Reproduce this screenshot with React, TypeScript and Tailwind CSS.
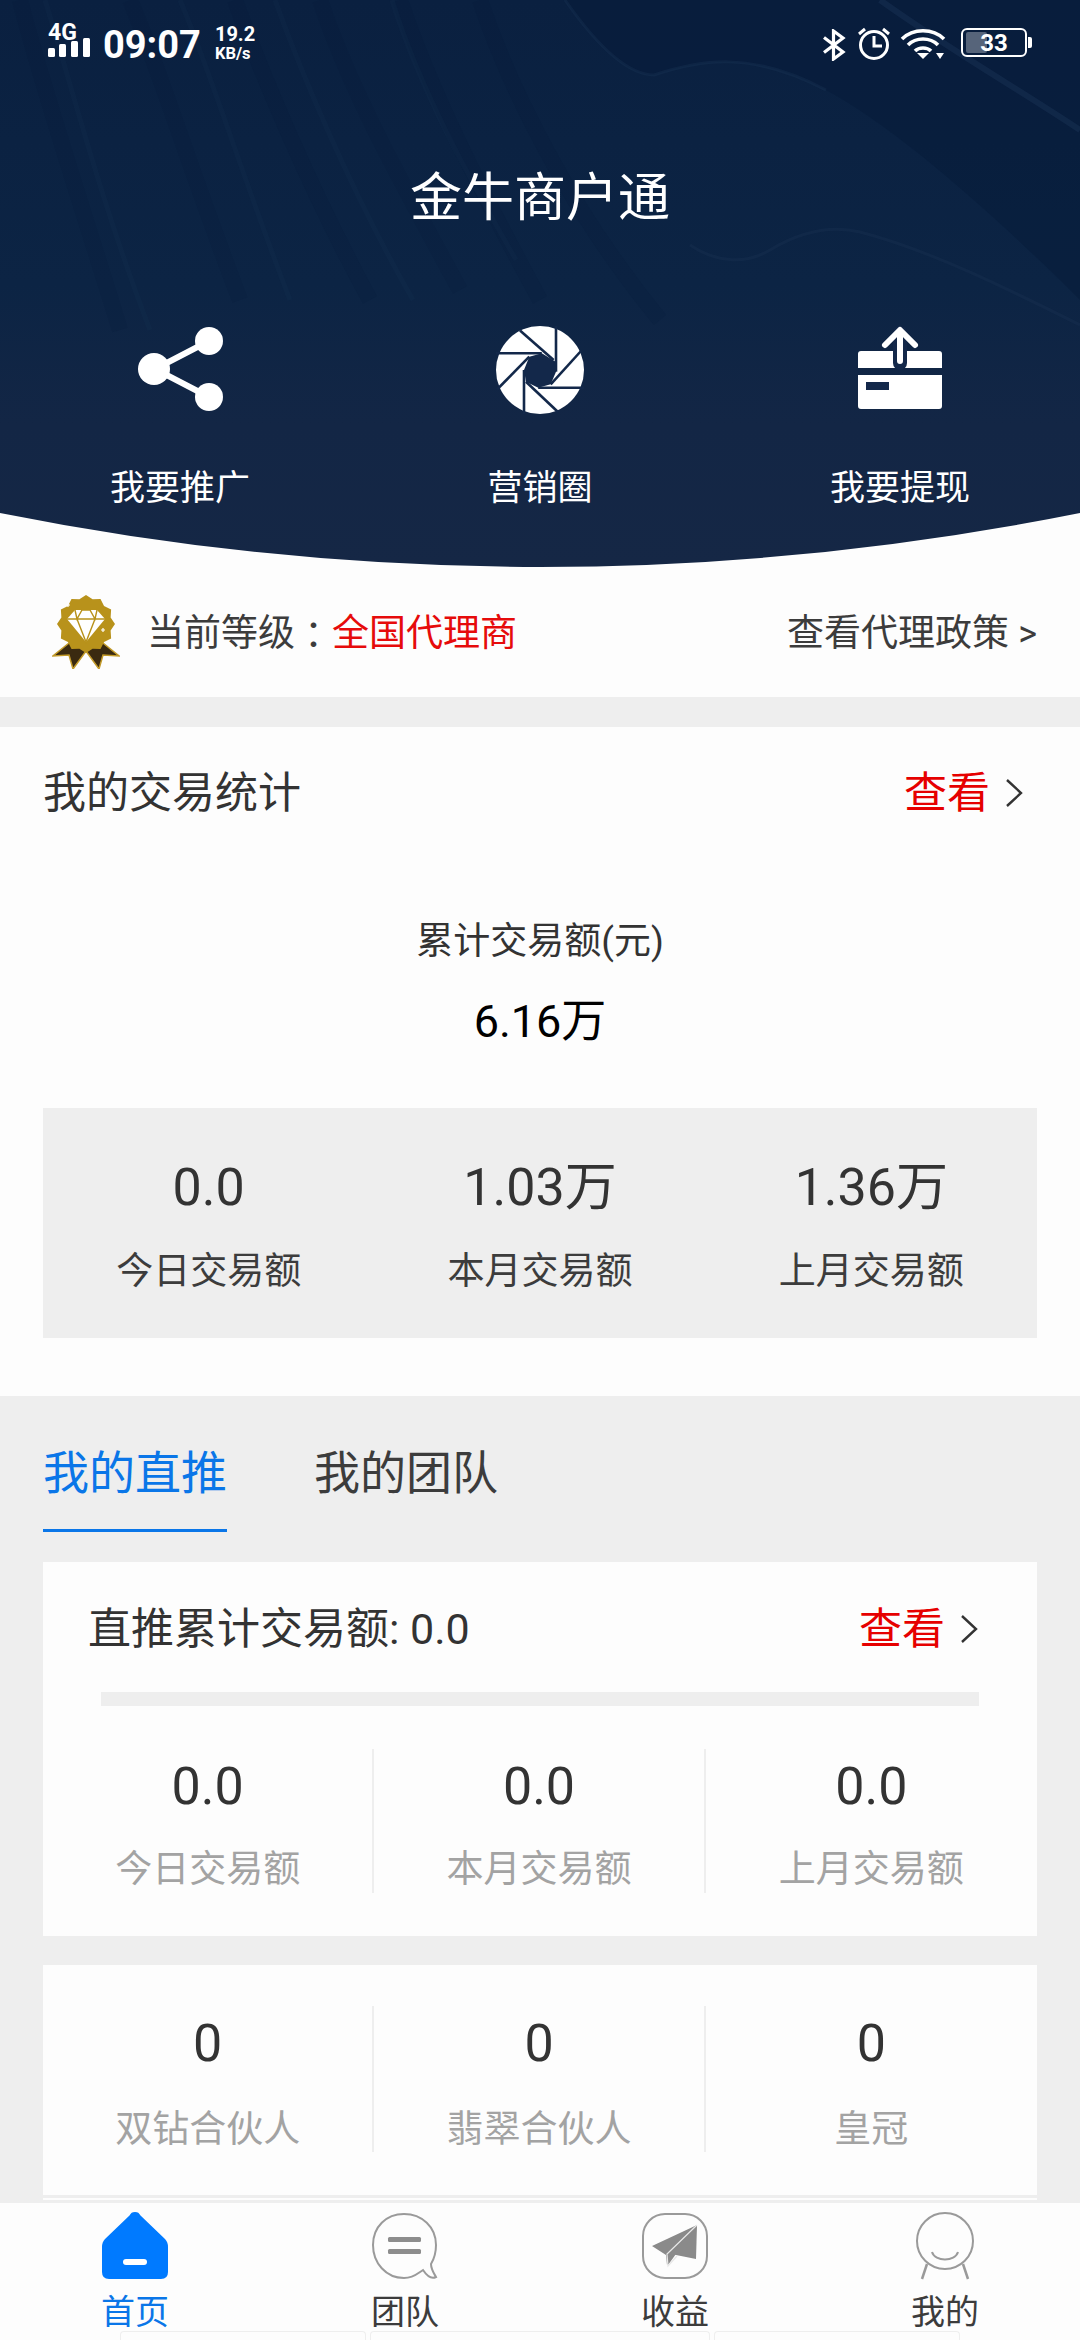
import React from "react";

const FONT = { fontFamily: '"Roboto","Noto Sans CJK SC",sans-serif' };

function HeaderBg() {
  return (
    <svg className="absolute inset-0" width="1080" height="567" viewBox="0 0 1080 567">
      <defs>
        <linearGradient id="hb" x1="0" y1="0" x2="0" y2="1">
          <stop offset="0" stopColor="#0a2040" />
          <stop offset="0.5" stopColor="#0c2444" />
          <stop offset="0.75" stopColor="#132645" />
          <stop offset="1" stopColor="#152745" />
        </linearGradient>
        <clipPath id="hc">
          <path d="M0 0H1080V513Q540 621 0 513Z" />
        </clipPath>
      </defs>
      <g clipPath="url(#hc)">
        <rect width="1080" height="567" fill="url(#hb)" />
        <g fill="none" stroke="#06193a" strokeOpacity="0.16" strokeWidth="16">
          <path d="M20 0C40 80 80 200 120 330" />
          <path d="M130 0C160 70 190 170 240 300" />
          <path d="M235 0C260 70 310 190 370 300" />
          <path d="M320 0C350 90 400 180 460 290" />
          <path d="M400 0C430 90 480 190 540 300" />
          <path d="M480 0C510 90 570 210 660 320" />
        </g>
        <g fill="none" stroke="#1b3558" strokeOpacity="0.16" strokeWidth="5">
          <path d="M45 0C70 80 100 200 150 330" />
          <path d="M180 0C210 70 240 170 290 300" />
          <path d="M275 0C300 70 350 190 413 300" />
          <path d="M392 0C420 90 470 180 516 260" />
        </g>
        <path d="M565 0C600 50 630 75 654 75C700 60 750 50 826 90C900 130 1000 220 1080 300V0Z" fill="#061a38" fillOpacity="0.4" />
        <path d="M565 0C600 50 630 75 654 75C700 60 750 50 826 90" fill="none" stroke="#1d3759" strokeOpacity="0.3" strokeWidth="3" />
        <path d="M690 245C715 262 745 265 770 250C800 232 830 225 860 232C930 250 1010 290 1080 325" fill="none" stroke="#1f3657" strokeOpacity="0.3" strokeWidth="3" />
        <path d="M880 0C950 50 1020 90 1080 130" fill="none" stroke="#1d3759" strokeOpacity="0.4" strokeWidth="6" />
      </g>
    </svg>
  );
}

function StatusBar() {
  return (
    <div className="relative flex h-[84px] justify-between pl-[48px] pr-[53px] pt-[24px] text-white">
      <div className="flex">
        <div className="flex w-[42px] flex-col">
          <div className="h-[13px] text-[23px] font-bold leading-[17px]">4G</div>
          <svg width="42" height="20" viewBox="0 0 42 20" fill="#fff">
            <rect x="0" y="11" width="7" height="9" rx="1.5" />
            <rect x="11" y="7" width="7" height="13" rx="1.5" />
            <rect x="23" y="4" width="7" height="16" rx="1.5" />
            <rect x="35" y="1" width="7" height="19" rx="1.5" />
          </svg>
        </div>
        <div className="ml-[13px] mt-[2px] text-[38px] font-bold leading-[38px]">09:07</div>
        <div className="ml-[14px] flex flex-col font-bold">
          <div className="text-[20px] leading-[21px]">19.2</div>
          <div className="text-[16.500px] leading-[17px]">KB/s</div>
        </div>
      </div>
      <div className="flex items-start">
        <svg width="24" height="32" viewBox="0 0 24 32" fill="none" stroke="#fff" strokeWidth="3.2" className="mt-[5px]">
          <path d="M2 8.5L21 23L11.5 30V2L21 9L2 23.5" />
        </svg>
        <svg width="34" height="34" viewBox="0 0 34 34" fill="none" stroke="#fff" strokeWidth="3" className="ml-[11px] mt-[2px]">
          <circle cx="17" cy="19" r="13.5" />
          <path d="M17 10V20H25" />
          <path d="M2 8L8 3M32 8L26 3" />
        </svg>
        <svg width="48" height="32" viewBox="0 0 48 32" fill="none" stroke="#fff" strokeWidth="3.6" className="ml-[9px] mt-[3px]">
          <path d="M2 12C13 1 33 1 44 12" />
          <path d="M8 18C16 10 30 10 38 18" />
          <path d="M15 24C19 20 27 20 31 24" />
          <path d="M17 26H29L23 32Z" fill="#fff" stroke="none" />
          <path d="M36 26H44L40 32Z" fill="#fff" stroke="none" />
        </svg>
        <div className="relative ml-[13px] mt-[4px] flex h-[29px] w-[66px] items-center justify-center rounded-[6px] border-2 border-white">
          <div className="absolute bottom-[2px] left-[3px] top-[2px] w-[21px] rounded-[2px] bg-[#56647a]" />
          <span className="relative text-[24px] font-bold leading-none">33</span>
          <div className="absolute left-[65px] top-[7px] h-[11px] w-[4px] rounded-r-[2px] bg-white" />
        </div>
      </div>
    </div>
  );
}

function ShareIcon() {
  return (
    <svg width="90" height="90" viewBox="0 0 90 90" fill="#fff">
      <path d="M74 16L20 44L74 72" fill="none" stroke="#fff" strokeWidth="6" />
      <circle cx="74" cy="16" r="14" />
      <circle cx="19" cy="44" r="16" />
      <circle cx="74" cy="72" r="14" />
    </svg>
  );
}

function ApertureIcon() {
  return (
    <svg width="90" height="90" viewBox="-45 -45 90 90">
      <circle r="44" fill="#fff" />
      <polygon points="1.8,-16.7 16,-8 16,1.7 10.7,14.3 -1.8,17.7 -14,11.7 -16,0 -10.7,-13.3" fill="#13284a" />
      <g stroke="#13284a" strokeWidth="2.6" fill="none">
        <path d="M-20 -39.5L13.6 -10" />
        <path d="M-44 -16.7H1.8" />
        <path d="M-43 19.5L-10.7 -13.3" />
        <path d="M-16 44V0" />
        <path d="M18 42L-14 11.7" />
        <path d="M-1.8 17.7H44" />
        <path d="M10.7 14.3L41 -19" />
        <path d="M16 -44V1.7" />
      </g>
    </svg>
  );
}

function CardIcon() {
  return (
    <svg width="90" height="90" viewBox="0 0 90 90">
      <path d="M3 29Q3 26 6 26H84Q87 26 87 29V43H3ZM3 50H87V81Q87 84 84 84H6Q3 84 3 81Z" fill="#fff" />
      <rect x="11" y="57" width="23" height="8" fill="#13284a" />
      <path d="M45 38V8" stroke="#13284a" strokeWidth="14" strokeLinecap="round" fill="none" />
      <path d="M45 36V6M30 20L45 5L60 20" stroke="#fff" strokeWidth="6" strokeLinecap="round" strokeLinejoin="round" fill="none" />
    </svg>
  );
}

function Medal() {
  const points: string[] = [];
  for (let i = 0; i < 24; i++) {
    const r = i % 2 === 0 ? 29 : 25.5;
    const a = (i / 24) * Math.PI * 2;
    points.push(`${34 + r * Math.sin(a)},${29 - r * Math.cos(a)}`);
  }
  return (
    <svg width="68" height="74" viewBox="0 0 68 74">
      <path d="M22 44L1 61L17 60L21 74L37 52Z" fill="#3a2a10" stroke="#c29a2a" strokeWidth="1.5" />
      <path d="M46 44L67 61L51 60L47 74L31 52Z" fill="#3a2a10" stroke="#c29a2a" strokeWidth="1.5" />
      <polygon points={points.join(" ")} fill="#b8921b" />
      <path d="M23 15H45L53 24L34 47L15 24Z" fill="#fff" />
      <path d="M15 24H53M25 24L34 47L43 24M23 15L25 24L30 15H38L43 24L45 15" fill="none" stroke="#b8921b" strokeWidth="1.4" />
      <path d="M16 8V12M14 10H18M51 33V37M49 35H53" stroke="#fff" strokeWidth="1.2" />
    </svg>
  );
}

function Chevron() {
  return (
    <svg width="20" height="32" viewBox="0 0 20 32" fill="none" stroke="#333" strokeWidth="2.4" className="ml-[14px]">
      <path d="M3 3L17 16L3 29" />
    </svg>
  );
}

function Header() {
  const items = [
    { icon: <ShareIcon />, label: "我要推广" },
    { icon: <ApertureIcon />, label: "营销圈" },
    { icon: <CardIcon />, label: "我要提现" },
  ];
  return (
    <div className="relative h-[567px] shrink-0 overflow-hidden">
      <HeaderBg />
      <StatusBar />
      <div className="relative mt-[81px] flex h-[64px] items-center justify-center pt-[4px] text-[52px] leading-none text-white">
        金牛商户通
      </div>
      <div className="relative mt-[96px] grid grid-cols-3">
        {items.map((it) => (
          <div key={it.label} className="flex flex-col items-center">
            <div className="h-[90px]">{it.icon}</div>
            <div className="mt-[51px] text-[35px] leading-[46px] text-white">{it.label}</div>
          </div>
        ))}
      </div>
    </div>
  );
}

function LevelRow() {
  return (
    <div className="flex h-[130px] shrink-0 items-center justify-between bg-[#fdfdfd] pl-[52px] pr-[43px]">
      <div className="flex items-center">
        <Medal />
        <div className="ml-[27px] flex items-center pt-[4px]">
          <span className="text-[37px] text-[#3c3c3c]">当前等级</span>
          <span className="font-['Noto_Sans_CJK_TC'] text-[37px] text-[#3c3c3c]">：</span>
          <span className="text-[37px] text-[#e60b0b]">全国代理商</span>
        </div>
      </div>
      <div className="pt-[4px] text-[37px] text-[#3c3c3c]">
        查看代理政策 <span className="text-[36px]">&gt;</span>
      </div>
    </div>
  );
}

function Stat({ v, l }: { v: string; l: string }) {
  return (
    <div className="flex flex-col items-center">
      <div className="h-[60px] text-[52px] leading-[60px] text-[#333]">{v}</div>
      <div className="mt-[30px] h-[48px] text-[37px] leading-[48px] text-[#3c3c3c]">{l}</div>
    </div>
  );
}

function SummaryCard() {
  return (
    <div className="h-[669px] shrink-0 bg-[#fdfdfd] px-[43px]">
      <div className="flex h-[130px] items-center justify-between pt-[2px]">
        <span className="text-[43px] text-[#333]">我的交易统计</span>
        <span className="flex items-center pr-[13px]">
          <span className="text-[43px] text-[#e60000]">查看</span>
          <Chevron />
        </span>
      </div>
      <div className="mt-[60px] text-center text-[37px] leading-[50px] text-[#333]">累计交易额(元)</div>
      <div className="mt-[30px] text-center text-[45px] font-normal leading-[50px] text-black">6.16万</div>
      <div className="mt-[61px] grid h-[230px] grid-cols-3 content-start bg-[#eeeeee] pt-[50px]">
        <Stat v="0.0" l="今日交易额" />
        <Stat v="1.03万" l="本月交易额" />
        <Stat v="1.36万" l="上月交易额" />
      </div>
    </div>
  );
}

function GreyStat({ v, l, last, h, gap }: { v: string; l: string; last?: boolean; h: string; gap: string }) {
  return (
    <div className={`flex flex-col items-center pt-[8px] ${h} ${last ? "" : "border-r-2 border-[#eeeeee]"}`}>
      <div className="h-[60px] text-[52px] leading-[60px] text-[#333]">{v}</div>
      <div className={`${gap} h-[48px] text-[37px] leading-[48px] text-[#a3a3a3]`}>{l}</div>
    </div>
  );
}

function Tabs() {
  return (
    <div className="flex h-[135px] items-start gap-[87px] px-[43px] pt-[43px]">
      <div className="flex h-[93px] w-[184px] flex-col border-b-[3px] border-[#0a76e8] pt-[4px] text-[46px] leading-[60px] text-[#0a76e8]">
        <span className="whitespace-nowrap">我的直推</span>
      </div>
      <div className="pt-[4px] text-[46px] leading-[60px] text-[#3c3c3c]">我的团队</div>
    </div>
  );
}

function DirectCard() {
  return (
    <div className="mx-[43px] h-[374px] bg-[#fdfdfd]">
      <div className="flex h-[130px] items-center justify-between pl-[45px] pr-[58px] pt-[4px]">
        <span className="text-[43px] text-[#333]">直推累计交易额: 0.0</span>
        <span className="flex items-center">
          <span className="text-[43px] text-[#e60000]">查看</span>
          <Chevron />
        </span>
      </div>
      <div className="mx-[58px] h-[14px] bg-[#eeeeee]" />
      <div className="mt-[43px] grid grid-cols-3">
        <GreyStat v="0.0" l="今日交易额" h="h-[144px]" gap="mt-[29px]" />
        <GreyStat v="0.0" l="本月交易额" h="h-[144px]" gap="mt-[29px]" />
        <GreyStat v="0.0" l="上月交易额" h="h-[144px]" gap="mt-[29px]" last />
      </div>
    </div>
  );
}

function PartnerCard() {
  return (
    <div className="mx-[43px] mt-[29px] h-[230px] bg-[#fdfdfd] pt-[41px]">
      <div className="grid grid-cols-3">
        <GreyStat v="0" l="双钻合伙人" h="h-[146px]" gap="mt-[32px]" />
        <GreyStat v="0" l="翡翠合伙人" h="h-[146px]" gap="mt-[32px]" />
        <GreyStat v="0" l="皇冠" h="h-[146px]" gap="mt-[32px]" last />
      </div>
    </div>
  );
}

function HomeIcon() {
  return (
    <svg width="68" height="68" viewBox="0 0 68 68">
      <path d="M34 0C37 0 38 1 39.500 3.500L64 27Q67 30 67 35V60Q67 67 60 67H8Q1 67 1 60V35Q1 30 4 27L28.500 3.500C30 1 31 0 34 0Z" fill="#007aff" />
      <rect x="22" y="47" width="24" height="6" rx="3" fill="#fff" />
    </svg>
  );
}

function ChatIcon() {
  return (
    <svg width="68" height="68" viewBox="0 0 68 68" fill="none">
      <path d="M33 2C15 2 2 15 2 33C2 51 15 66 33 66C43 66 47 61 52 58C56 64 61 67 65 65C62 60 60 57 60 52C63 47 65 40 65 33C65 15 51 2 33 2Z" stroke="#9a9a9a" strokeWidth="2" />
      <rect x="17" y="25" width="33" height="5" rx="1.500" fill="#8d8d8d" />
      <rect x="17" y="37" width="33" height="5" rx="1.500" fill="#8d8d8d" />
    </svg>
  );
}

function PlaneIcon() {
  return (
    <svg width="68" height="68" viewBox="0 0 68 68" fill="none">
      <rect x="2" y="2" width="64" height="64" rx="22" stroke="#9a9a9a" strokeWidth="2" />
      <path d="M56 13L11 34L25 43L26 53Z" fill="#8a8a8a" />
      <path d="M56 13L27 40L27 53Z" fill="#8a8a8a" />
      <path d="M56 13L30 42L55 47Z" fill="#8a8a8a" />
      <path d="M56 13L26 42L27 54L36 44" stroke="#e8e8e8" strokeWidth="1.200" />
    </svg>
  );
}

function MineIcon() {
  return (
    <svg width="68" height="68" viewBox="0 0 68 68" fill="none" stroke="#9a9a9a">
      <circle cx="34" cy="29" r="28" strokeWidth="2" />
      <path d="M21 40C24 50 44 50 47 40" strokeWidth="2" />
      <path d="M16 52L11 67M52 52L57 67" strokeWidth="2.500" />
    </svg>
  );
}

function BottomNav() {
  const items = [
    { icon: <HomeIcon />, label: "首页", active: true },
    { icon: <ChatIcon />, label: "团队", active: false },
    { icon: <PlaneIcon />, label: "收益", active: false },
    { icon: <MineIcon />, label: "我的", active: false },
  ];
  return (
    <div className="relative h-[137px] shrink-0 bg-[#fdfdfd]">
      <div className="grid grid-cols-4 pt-[9px]">
        {items.map((it) => (
          <div key={it.label} className="flex flex-col items-center">
            <div className="h-[68px]">{it.icon}</div>
            <div className={`mt-[12px] text-[34px] leading-[40px] ${it.active ? "text-[#0a76e8]" : "text-[#3c3c3c]"}`}>
              {it.label}
            </div>
          </div>
        ))}
      </div>
      <div className="absolute bottom-0 left-0 flex h-[9px] w-full">
        <div className="ml-[120px] w-[246px] rounded-t-[4px] border border-b-0 border-[#eeeeee]" />
        <div className="ml-[4px] w-[340px] rounded-t-[4px] border border-b-0 border-[#eeeeee]" />
        <div className="ml-[4px] w-[246px] rounded-t-[4px] border border-b-0 border-[#eeeeee]" />
      </div>
    </div>
  );
}

export default function App() {
  return (
    <div className="flex h-[2340px] w-[1080px] flex-col overflow-hidden bg-[#eeeeee]" style={FONT}>
      <div className="relative shrink-0 bg-[#fdfdfd]">
        <Header />
      </div>
      <LevelRow />
      <div className="h-[30px] shrink-0" />
      <SummaryCard />
      <div className="min-h-0 flex-1 overflow-hidden">
        <Tabs />
        <div className="h-[31px]" />
        <DirectCard />
        <PartnerCard />
        <div className="mx-[43px] mt-[3px] h-[2px] bg-[#fdfdfd]" />
      </div>
      <BottomNav />
    </div>
  );
}
